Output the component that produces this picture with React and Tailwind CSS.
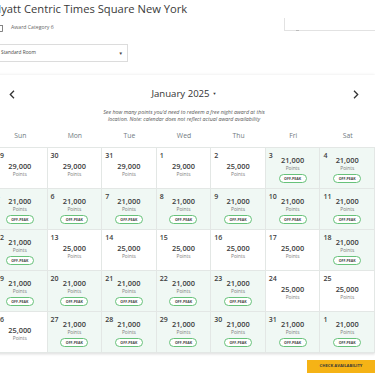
import React from "react";

const weeks = [
  [
    { d: 29, p: "29,000" },
    { d: 30, p: "29,000" },
    { d: 31, p: "29,000" },
    { d: 1, p: "29,000" },
    { d: 2, p: "25,000" },
    { d: 3, p: "21,000", off: true },
    { d: 4, p: "21,000", off: true },
  ],
  [
    { d: 5, p: "21,000", off: true },
    { d: 6, p: "21,000", off: true },
    { d: 7, p: "21,000", off: true },
    { d: 8, p: "21,000", off: true },
    { d: 9, p: "21,000", off: true },
    { d: 10, p: "21,000", off: true },
    { d: 11, p: "21,000", off: true },
  ],
  [
    { d: 12, p: "21,000", off: true },
    { d: 13, p: "25,000" },
    { d: 14, p: "25,000" },
    { d: 15, p: "25,000" },
    { d: 16, p: "25,000" },
    { d: 17, p: "25,000" },
    { d: 18, p: "21,000", off: true },
  ],
  [
    { d: 19, p: "21,000", off: true },
    { d: 20, p: "21,000", off: true },
    { d: 21, p: "21,000", off: true },
    { d: 22, p: "21,000", off: true },
    { d: 23, p: "21,000", off: true },
    { d: 24, p: "25,000" },
    { d: 25, p: "25,000" },
  ],
  [
    { d: 26, p: "25,000" },
    { d: 27, p: "21,000", off: true },
    { d: 28, p: "21,000", off: true },
    { d: 29, p: "21,000", off: true },
    { d: 30, p: "21,000", off: true },
    { d: 31, p: "21,000", off: true },
    { d: 1, p: "21,000", off: true },
  ],
];

const days = ["Sun", "Mon", "Tue", "Wed", "Thu", "Fri", "Sat"];

const DayCell = ({ day }) => (
  <div
    className={`relative flex h-[41px] flex-col items-center justify-center border-r border-b border-[#e3e7e5] pt-[4px] ${
      day.off ? "bg-[#f0f8f4]" : "bg-white"
    }`}
  >
    <span className="absolute left-[3px] top-[3px] text-[7px] font-semibold leading-[9px] text-[#3d3d3d]">
      {day.d}
    </span>
    <span className="text-[7.4px] font-semibold leading-[9px] text-[#3d3d3d]">
      {day.p}
    </span>
    <span className="text-[4.8px] leading-[6px] text-[#7a7a7a]">Points</span>
    {day.off && (
      <span className="mt-[2.5px] flex h-[9px] w-[28px] items-center justify-center rounded-full border border-[#67c27a] bg-white text-[3.6px] font-bold text-[#444]">
        OFF-PEAK
      </span>
    )}
  </div>
);

const App = () => {
  return (
    <div className="ml-[-7px] w-[382px] bg-white font-['Open_Sans',sans-serif] text-[#333]">
      <div className="flex h-[18px] items-center">
        <h1 className="text-[11.2px] font-normal leading-[14px] text-[#3a3a3a]">
          Hyatt Centric Times Square New York
        </h1>
      </div>
      <div className="flex h-[20px] justify-between">
        <div className="flex items-center gap-[8px]">
          <svg width="9" height="7" viewBox="0 0 9 7" className="ml-[1px]">
            <rect x="5.5" y="0.5" width="3" height="6" fill="none" stroke="#666" strokeWidth="0.8" />
          </svg>
          <span className="text-[5.2px] text-[#666]">Award Category 6</span>
        </div>
        <div className="relative h-[13px] w-[91px] border-l border-b border-[#e2e2e2]">
          <span className="absolute left-[11px] bottom-[-1px] h-[1px] w-[3px] bg-[#bbb]" />
        </div>
      </div>
      <div className="mt-[6px] flex h-[18px] w-[135px] items-center justify-between border border-[#dcdcdc] pl-[7px] pr-[4px]">
        <span className="text-[4.8px] text-[#444]">Standard Room</span>
        <span className="text-[4.5px] text-[#444]">▼</span>
      </div>

      <div className="mt-[13px] bg-white pt-[9px] shadow-[0_0_3px_rgba(0,0,0,0.1),0_2px_2px_rgba(0,0,0,0.06)]">
        <div className="flex h-[20px] items-center justify-between px-[16px]">
          <svg width="6" height="9" viewBox="0 0 6 9">
            <path d="M5 0.8 L1.3 4.5 L5 8.2" fill="none" stroke="#333" strokeWidth="1.3" />
          </svg>
          <div className="flex items-center gap-[3px]">
            <span className="text-[9.6px] text-[#333]">January 2025</span>
            <span className="text-[4px] text-[#333]">▼</span>
          </div>
          <svg width="6" height="9" viewBox="0 0 6 9">
            <path d="M1 0.8 L4.7 4.5 L1 8.2" fill="none" stroke="#333" strokeWidth="1.3" />
          </svg>
        </div>
        <p className="mt-[5px] text-center text-[5.3px] italic leading-[7.3px] text-[#555]">
          See how many points you'd need to redeem a free night award at this
          <br />
          location. Note: calendar does not reflect actual award availability
        </p>
        <div className="mt-[2px] grid grid-cols-7 border-b border-[#e3e7e5]">
          {days.map((d) => (
            <div
              key={d}
              className="flex h-[21px] items-center justify-center text-[6.8px] text-[#707a80]"
            >
              {d}
            </div>
          ))}
        </div>
        <div className="grid grid-cols-7">
          {weeks.map((week, i) =>
            week.map((day, j) => <DayCell key={`${i}-${j}`} day={day} />)
          )}
        </div>
      </div>

      <div className="mt-[7px] flex justify-end">
        <button className="flex h-[13px] w-[68px] items-center justify-center bg-[#f5b316] text-[4.2px] font-bold text-[#3a3a3a]">
          CHECK AVAILABILITY
        </button>
      </div>
    </div>
  );
};

export default App;
